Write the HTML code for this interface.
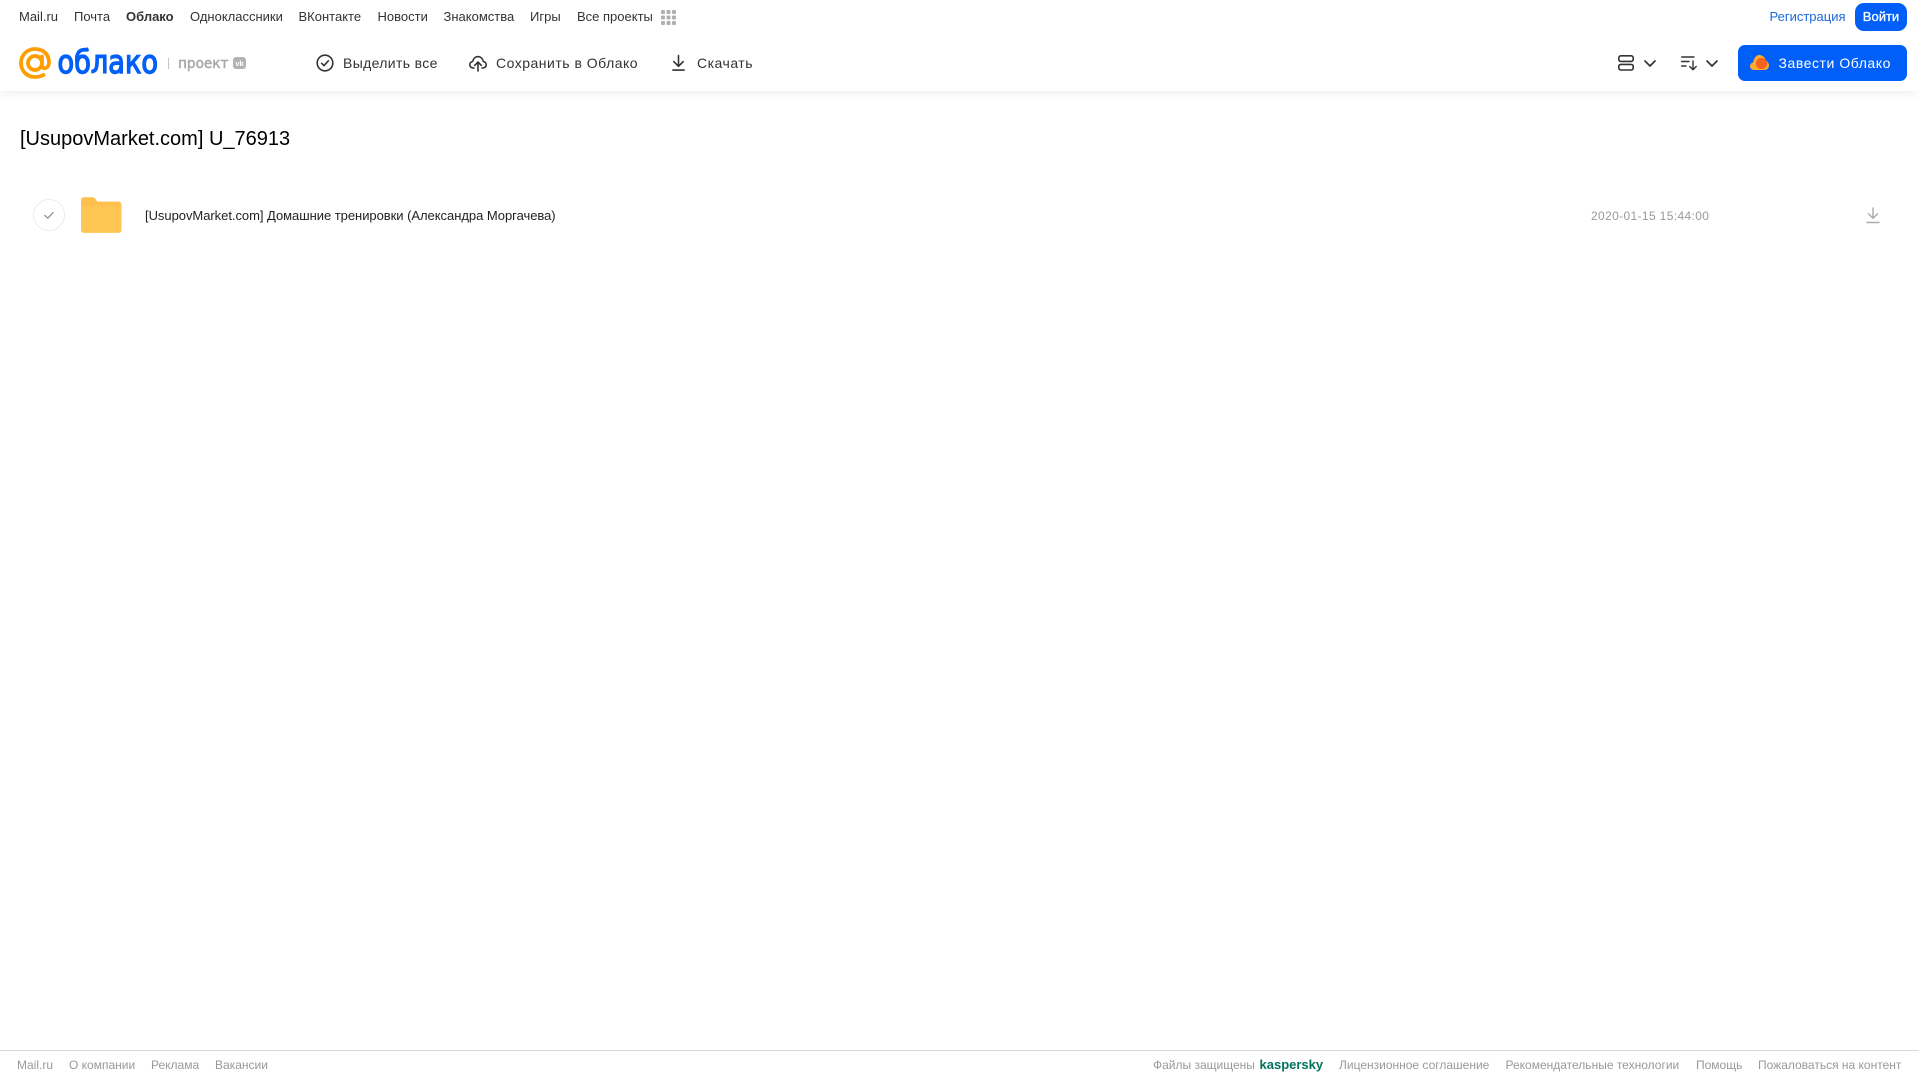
<!DOCTYPE html>
<html lang="ru">
<head>
<meta charset="utf-8">
<title>Облако</title>
<style>
html,body{margin:0;padding:0;background:#fff;}
body{position:relative;width:1919px;height:1079px;overflow:hidden;font-family:"Liberation Sans",sans-serif;}
.t{position:absolute;white-space:nowrap;line-height:20px;}
.n{top:7px;font-size:13px;color:#333;}
.b{top:53px;font-size:14px;color:#333;letter-spacing:.35px;}
.f{top:1055px;font-size:12px;color:#999;}
svg{position:absolute;overflow:visible;}
#hd{position:absolute;left:0;top:0;width:1919px;height:91px;background:#fff;box-shadow:0 2px 10px rgba(0,0,0,.07);}
#login{position:absolute;left:1855px;top:3px;width:52px;height:28px;background:#005ff9;border-radius:9px;color:#fff;font-size:13px;-webkit-text-stroke:.3px #fff;line-height:28px;text-align:center;}
#get{position:absolute;left:1738px;top:45px;width:169px;height:36px;background:#005ff9;border-radius:7px;}
#foot{position:absolute;left:0;top:1050px;width:1919px;height:1px;background:#d9d9d9;}
</style>
</head>
<body>
<div id="hd"></div>

<span class="t n" style="left:19px">Mail.ru</span>
<span class="t n" style="left:74px">Почта</span>
<span class="t n" style="left:126px;font-weight:bold">Облако</span>
<span class="t n" style="left:190px">Одноклассники</span>
<span class="t n" style="left:298.5px">ВКонтакте</span>
<span class="t n" style="left:377.5px">Новости</span>
<span class="t n" style="left:443.5px">Знакомства</span>
<span class="t n" style="left:530px">Игры</span>
<span class="t n" style="left:577px">Все проекты</span>
<svg style="left:661px;top:10px" width="15" height="15" viewBox="0 0 15 15" fill="#b0b0b0">
<rect x="0" y="0" width="4" height="4" rx="1"/><rect x="5.5" y="0" width="4" height="4" rx="1"/><rect x="11" y="0" width="4" height="4" rx="1"/>
<rect x="0" y="5.5" width="4" height="4" rx="1"/><rect x="5.5" y="5.5" width="4" height="4" rx="1"/><rect x="11" y="5.5" width="4" height="4" rx="1"/>
<rect x="0" y="11" width="4" height="4" rx="1"/><rect x="5.5" y="11" width="4" height="4" rx="1"/><rect x="11" y="11" width="4" height="4" rx="1"/>
</svg>
<span class="t n" style="left:1769.5px;color:#1a68dc">Регистрация</span>
<div id="login">Войти</div>

<!-- logo -->
<svg style="left:0;top:0" width="260" height="91" viewBox="0 0 260 91">
<g fill="none" stroke="#ff9e00" stroke-width="3.8" stroke-linecap="round">
<circle cx="35" cy="63" r="7"/>
<path d="M42 56.5V65.5C42 69.5 48.8 69.5 49 62.5C49.2 54 42.8 49 35 49C27 49 21 55.2 21 63C21 71 27 77 35 77C38.3 77 41 76.4 43.5 75"/>
</g>
<text x="57.5" y="73" font-family="DejaVu Sans" font-size="32" fill="#005ff9" stroke="#005ff9" stroke-width="1.4" textLength="100.5" lengthAdjust="spacingAndGlyphs">облако</text>
<rect x="168" y="58" width="1" height="11" fill="#c4c4c4"/>
<text x="178" y="68" font-family="DejaVu Sans" font-size="14.5" fill="#a8a8a8" stroke="#a8a8a8" stroke-width=".5" textLength="50.5" lengthAdjust="spacingAndGlyphs">проект</text>
<rect x="233" y="57" width="13" height="12" rx="3" fill="#b3b3b3"/>
<text x="239.5" y="66" font-family="Liberation Sans" font-size="7.5" font-weight="bold" fill="#fff" text-anchor="middle">vk</text>
</svg>

<!-- toolbar -->
<svg style="left:316px;top:54px" width="18" height="18" viewBox="0 0 18 18" fill="none" stroke="#333" stroke-width="1.6" stroke-linecap="round" stroke-linejoin="round">
<circle cx="9" cy="9" r="7.8"/><path d="M5.6 9.3L8 11.6L12.4 6.8"/>
</svg>
<span class="t b" style="left:343px">Выделить все</span>
<svg style="left:469px;top:54px" width="18" height="18" viewBox="0 0 18 18" fill="none" stroke="#333" stroke-width="1.6" stroke-linecap="round" stroke-linejoin="round">
<path d="M5 14H4.2C2.2 14 .8 12.5.8 10.7C.8 9 2 7.7 3.7 7.4C4.2 4.6 6.4 2.6 9 2.6C11.6 2.6 13.8 4.6 14.3 7.4C16 7.7 17.2 9 17.2 10.7C17.2 12.5 15.8 14 13.8 14H13"/>
<path d="M9 17V8.5M5.8 11.3L9 8L12.2 11.3"/>
</svg>
<span class="t b" style="left:496px;letter-spacing:.5px">Сохранить в Облако</span>
<svg style="left:671px;top:54px" width="15" height="18" viewBox="0 0 16 18" fill="none" stroke="#333" stroke-width="1.7" stroke-linecap="round" stroke-linejoin="round">
<path d="M8 1V12M3 7.5L8 12.5L13 7.5"/><path d="M2 16.5H14"/>
</svg>
<span class="t b" style="left:697px;letter-spacing:.5px">Скачать</span>

<!-- right -->
<svg style="left:1618px;top:55px" width="16" height="16" viewBox="0 0 16 16" fill="none" stroke="#333" stroke-width="1.6">
<rect x=".8" y=".8" width="14.4" height="5.6" rx="2"/><rect x=".8" y="9.4" width="14.4" height="5.6" rx="2"/>
</svg>
<svg style="left:1644px;top:60px" width="12" height="7" viewBox="0 0 12 7" fill="none" stroke="#333" stroke-width="1.7" stroke-linecap="round" stroke-linejoin="round"><path d="M1 1L6 6L11 1"/></svg>
<svg style="left:1681px;top:56px" width="17" height="15" viewBox="0 0 17 15" fill="none" stroke="#333" stroke-width="1.4" stroke-linecap="round" stroke-linejoin="round">
<path d="M.7 1H13M.7 5.5H8M.7 10H5"/><path d="M12 5V13.5M8.8 10.5L12 13.7L15.2 10.5"/>
</svg>
<svg style="left:1706px;top:60px" width="12" height="7" viewBox="0 0 12 7" fill="none" stroke="#333" stroke-width="1.7" stroke-linecap="round" stroke-linejoin="round"><path d="M1 1L6 6L11 1"/></svg>

<div id="get"></div>
<svg style="left:1750px;top:54px" width="19" height="17" viewBox="0 0 19 17">
<path d="M4 16C1.8 16 0 14.3 0 12.2C0 10.3 1.4 8.8 3.2 8.5C3.4 5 5.8 1 9 1C12.5 1 15.4 3.6 15.8 6.8C17.6 7.4 19 9.3 19 11.5C19 14 17 16 14.5 16Z" fill="#ffa930"/>
<circle cx="11.5" cy="9.5" r="5.6" fill="#f5641e"/>
</svg>
<span class="t b" style="left:1778.5px;color:#fff;letter-spacing:.55px">Завести Облако</span>

<!-- content -->
<span class="t" style="left:20px;top:127.5px;font-size:20px;line-height:22px;color:#000">[UsupovMarket.com] U_76913</span>

<svg style="left:33px;top:199px" width="32" height="32" viewBox="0 0 32 32" fill="none">
<circle cx="16" cy="16" r="15.5" stroke="#ececec"/>
<path d="M11.8 16.4L14.8 19.2L20 13.6" stroke="#8f8f8f" stroke-width="1.3" stroke-linecap="round" stroke-linejoin="round"/>
</svg>
<svg style="left:81px;top:197px" width="40.5" height="36" viewBox="0 0 41 36">
<path d="M0 3C0 1.3 1.3 0 3 0H11C13 0 14 .8 15 2.2L16.5 4.5H38C39.7 4.5 41 5.8 41 7.5V33C41 34.7 39.7 36 38 36H3C1.3 36 0 34.7 0 33Z" fill="#ffc04d"/>
<path d="M0 9H41V33C41 34.7 39.7 36 38 36H3C1.3 36 0 34.7 0 33Z" fill="#ffc654"/>
</svg>
<span class="t" style="left:145px;top:206px;font-size:13px;letter-spacing:-.04px;color:#1f1f1f">[UsupovMarket.com] Домашние тренировки (Александра Моргачева)</span>
<span class="t" style="left:1591px;top:206px;font-size:12px;color:#999;letter-spacing:.36px">2020-01-15 15:44:00</span>
<svg style="left:1866px;top:207px" width="14" height="17" viewBox="0 0 14 17" fill="none" stroke="#aaa" stroke-width="1.4" stroke-linecap="round" stroke-linejoin="round">
<path d="M7 1V11M2.5 6.8L7 11.3L11.5 6.8"/><path d="M1 15.5H13"/>
</svg>

<!-- footer -->
<div id="foot"></div>
<span class="t f" style="left:17px">Mail.ru</span>
<span class="t f" style="left:69px">О компании</span>
<span class="t f" style="left:151px">Реклама</span>
<span class="t f" style="left:215px">Вакансии</span>
<span class="t f" style="left:1153px">Файлы защищены</span>
<span class="t f" style="left:1259.5px;font-size:13px;font-weight:bold;color:#00745c">kaspersky</span>
<span class="t f" style="left:1339px">Лицензионное соглашение</span>
<span class="t f" style="left:1505.5px">Рекомендательные технологии</span>
<span class="t f" style="left:1696px">Помощь</span>
<span class="t f" style="left:1758px">Пожаловаться на контент</span>
</body>
</html>
